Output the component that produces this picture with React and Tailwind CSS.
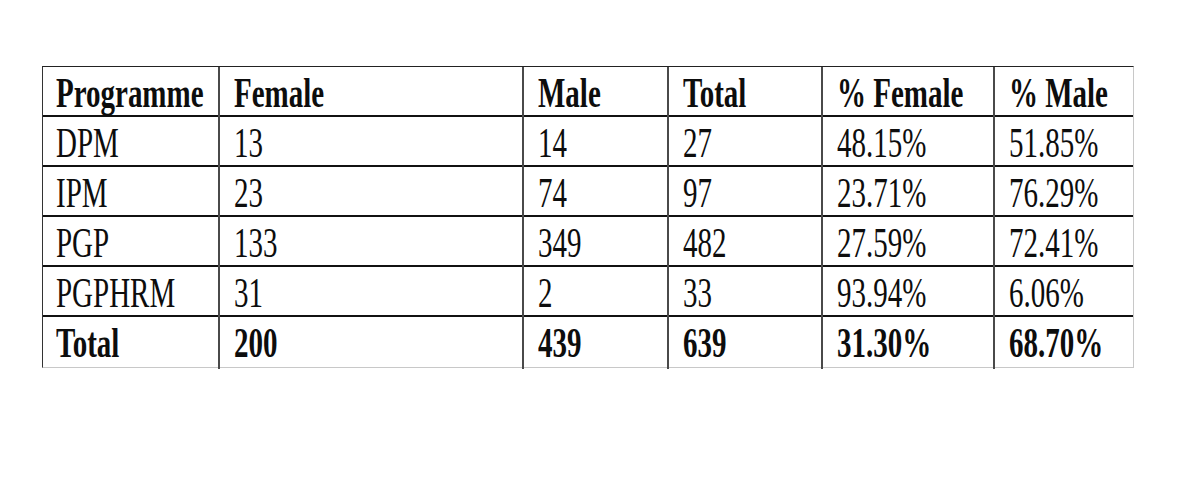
import React from "react";

const rows = [
  ["DPM", "13", "14", "27", "48.15%", "51.85%"],
  ["IPM", "23", "74", "97", "23.71%", "76.29%"],
  ["PGP", "133", "349", "482", "27.59%", "72.41%"],
  ["PGPHRM", "31", "2", "33", "93.94%", "6.06%"],
];

const header = ["Programme", "Female", "Male", "Total", "% Female", "% Male"];
const total = ["Total", "200", "439", "639", "31.30%", "68.70%"];

function Row({ cells, bold, last }) {
  return (
    <div
      className={
        "grid grid-cols-[175px_304px_145px_154px_172px_140px] h-[50px] " +
        (last ? "" : "border-b-2 border-b-[#111]")
      }
    >
      {cells.map((c, i) => (
        <div
          key={i}
          className={
            "leading-[52px] whitespace-nowrap overflow-visible " +
            (i === 0 ? "pl-[13px]" : "pl-[14px] border-l-2 border-l-[#4a4a4a]") +
            (bold ? " font-bold" : " font-normal")
          }
        >
          <span className="inline-block origin-left scale-x-[0.69]">{c}</span>
        </div>
      ))}
    </div>
  );
}

export default function App() {
  return (
    <div className="w-[1200px] h-[499px] bg-white overflow-hidden">
      <div
        className="ml-[42px] mt-[66px] w-[1092px] border-t border-t-[#222] border-l border-l-[#333] border-r border-r-[#c8c8c8] border-b border-b-[#c8c8c8] text-[42px] text-[#0d0d0d]"
        style={{ fontFamily: '"Liberation Serif", "Times New Roman", serif' }}
      >
        <Row cells={header} bold />
        {rows.map((r, i) => (
          <Row key={i} cells={r} />
        ))}
        <Row cells={total} bold last />
      </div>
    </div>
  );
}
